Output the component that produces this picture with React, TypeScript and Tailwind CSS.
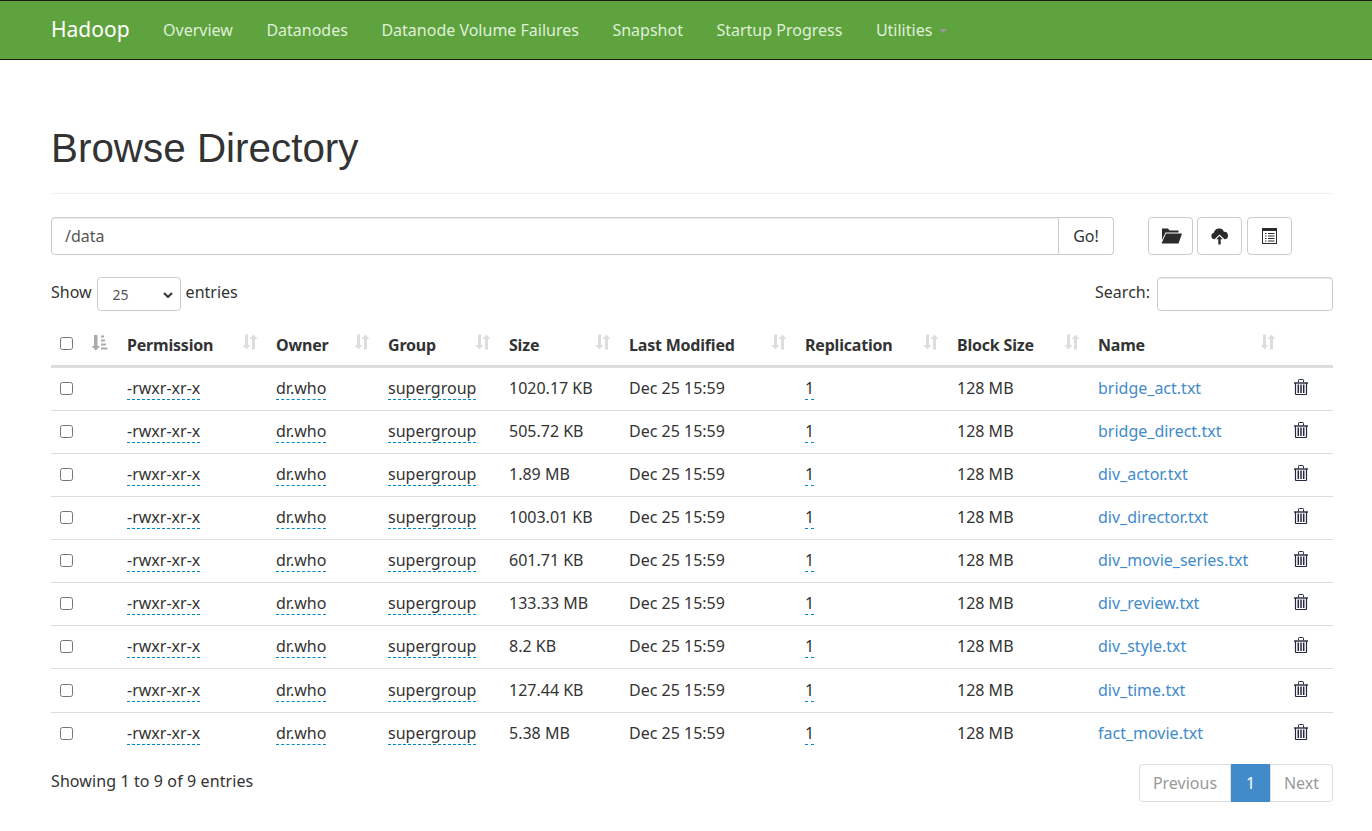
import React from 'react'

const navItems = ['Overview', 'Datanodes', 'Datanode Volume Failures', 'Snapshot', 'Startup Progress']

const files = [
  { size: '1020.17 KB', name: 'bridge_act.txt' },
  { size: '505.72 KB', name: 'bridge_direct.txt' },
  { size: '1.89 MB', name: 'div_actor.txt' },
  { size: '1003.01 KB', name: 'div_director.txt' },
  { size: '601.71 KB', name: 'div_movie_series.txt' },
  { size: '133.33 MB', name: 'div_review.txt' },
  { size: '8.2 KB', name: 'div_style.txt' },
  { size: '127.44 KB', name: 'div_time.txt' },
  { size: '5.38 MB', name: 'fact_movie.txt' },
]

const columns = ['Permission', 'Owner', 'Group', 'Size', 'Last Modified', 'Replication', 'Block Size', 'Name']

function SortIcon() {
  return (
    <svg width="16" height="16" viewBox="0 0 16 16" className="mb-[5px] shrink-0 text-[#dddddd]" fill="currentColor">
      <path d="M3 0.500h3v10.500h2.500L4.500 15.500 0.500 11H3z" />
      <path d="M10 15.500h3V5h2.500L11.500 0.500 7.500 5H10z" />
    </svg>
  )
}

function SortActiveIcon() {
  return (
    <svg width="17" height="16" viewBox="0 0 17 16" className="mb-[2px] text-[#aaaaaa]" fill="currentColor">
      <path d="M3 0h3.500v11h2.500L4.750 15.500 0.500 11H3z" />
      <path d="M10 0.500h3v2h-3zM10 4.500h4v2h-4zM10 8.500h5v2h-5zM10 12.500h6.500v2H10z" />
    </svg>
  )
}

function TrashIcon() {
  return (
    <svg width="14" height="16" viewBox="0 0 14 16" fill="none" stroke="#23283f" className="mb-[3px]">
      <path d="M0 4h14" strokeWidth="1.400" />
      <path d="M4.500 3.500V1.300a0.800 0.800 0 0 1 0.800-0.800h3.400a0.800 0.800 0 0 1 0.800 0.800v2.200" />
      <path d="M1.500 4v10.700a0.800 0.800 0 0 0 0.800 0.800h9.400a0.800 0.800 0 0 0 0.800-0.800V4" strokeWidth="1.200" />
      <path d="M4.300 5.500v8.500M7 5.500v8.500M9.700 5.500v8.500" strokeWidth="1.500" />
    </svg>
  )
}

function FolderOpenIcon() {
  return (
    <svg width="21" height="16" viewBox="0 0 21 16" fill="#2b2b2b" className="ml-[2px]">
      <path d="M1 0.500h6l1.500 2H17.500v2H4.500L1 12z" />
      <path d="M5 5.500h16l-3.500 10H0.500z" />
    </svg>
  )
}

function CloudUploadIcon() {
  return (
    <svg width="17" height="17" viewBox="0 0 17 17" fill="#2b2b2b">
      <path d="M8.500 0.500a4.500 4.500 0 0 1 4.300 3.200A3.800 3.800 0 0 1 13.500 11.300L8.500 6.500 3.500 11.300A3.300 3.300 0 0 1 2.900 4.800 5 5 0 0 1 8.500 0.500z" />
      <path d="M8.500 8l3.200 3.200H9.700V16.500H7.300V11.200H5.300z" />
    </svg>
  )
}

function ListAltIcon() {
  return (
    <svg width="15" height="16" viewBox="0 0 15 16" fill="none">
      <rect x="0.500" y="0.500" width="14" height="15" stroke="#2b2b2b" />
      <rect x="0" y="0" width="15" height="3" fill="#2b2b2b" />
      <path d="M3 5.500h1.500M6 5.500h6.500M3 8h1.500M6 8h6.500M3 10.500h1.500M6 10.500h6.500M3 13h1.500M6 13h6.500" stroke="#2b2b2b" />
    </svg>
  )
}

function IconButton({ children, className }: { children: React.ReactNode; className: string }) {
  return (
    <button className={`flex h-[38px] w-[45px] items-center justify-center rounded-[4px] border border-[#cccccc] bg-white ${className}`}>
      {children}
    </button>
  )
}

export default function App() {
  return (
    <div className="min-h-[831px] bg-white font-['Noto_Sans',sans-serif] text-[16px] text-[#333333]">
      <nav className="flex h-[60px] items-center border-y border-[#1a1a1a] bg-[#5fa33e] pl-[51px]">
        <a className="mr-[33.500px] text-[21px] text-white">Hadoop</a>
        <ul className="flex items-center gap-[33.500px] text-[#dff0d8]">
          {navItems.map((item) => (
            <li key={item}>{item}</li>
          ))}
          <li className="flex items-center gap-[7px]">
            Utilities
            <span className="mt-[2px] h-0 w-0 border-x-[4px] border-t-[4px] border-x-transparent border-t-[#999999]" />
          </li>
        </ul>
      </nav>

      <main className="pr-[39px] pl-[51px]">
        <div className="mt-[60px] border-b border-[#eeeeee] pb-[17px]">
          <h1 className="pt-[1px] font-['Liberation_Sans',sans-serif] text-[40.400px] leading-[55px] font-normal">Browse Directory</h1>
        </div>

        <div className="mt-[23px] flex items-center">
          <div className="flex h-[38px] w-[1063px]">
            <input
              readOnly
              value="/data"
              className="min-w-0 flex-1 rounded-l-[4px] border border-[#cccccc] px-[13px] text-[#555555] shadow-[inset_0_1px_1px_rgba(0,0,0,0.075)] outline-none"
            />
            <button className="w-[55px] rounded-r-[4px] border border-l-0 border-[#cccccc] bg-white">Go!</button>
          </div>
          <IconButton className="ml-[34px]">
            <FolderOpenIcon />
          </IconButton>
          <IconButton className="ml-[4px]">
            <CloudUploadIcon />
          </IconButton>
          <IconButton className="ml-[5px]">
            <ListAltIcon />
          </IconButton>
        </div>

        <div className="mt-[22px] flex h-[34px] items-center justify-between">
          <div className="flex items-center gap-[5px]">
            <span className="mb-[4px]">Show</span>
            <div className="relative">
              <select className="block h-[34px] w-[84px] appearance-none rounded-[4px] border border-[#cccccc] bg-white pl-[15px] text-[14px] text-[#555555]">
                <option>25</option>
              </select>
              <svg width="10" height="6" viewBox="0 0 10 6" fill="none" stroke="#333333" strokeWidth="2" className="absolute top-[15px] left-[66px]">
                <path d="M1 1l4 4 4-4" />
              </svg>
            </div>
            <span className="mb-[4px]">entries</span>
          </div>
          <div className="flex items-center gap-[7px]">
            <span className="mb-[4px]">Search:</span>
            <input className="h-[34px] w-[176px] rounded-[4px] border border-[#cccccc] shadow-[inset_0_1px_1px_rgba(0,0,0,0.075)] outline-none" />
          </div>
        </div>

        <table className="mt-[12px] w-[1282px] table-fixed border-collapse">
          <colgroup>
            <col className="w-[33px]" />
            <col className="w-[35px]" />
            <col className="w-[149px]" />
            <col className="w-[112px]" />
            <col className="w-[121px]" />
            <col className="w-[120px]" />
            <col className="w-[176px]" />
            <col className="w-[152px]" />
            <col className="w-[141px]" />
            <col className="w-[196px]" />
            <col className="w-[47px]" />
          </colgroup>
          <thead>
            <tr className="h-[43px] border-b-[3px] border-[#dddddd]">
              <th className="pl-[9px] text-left align-middle">
                <input type="checkbox" className="block h-[13px] w-[13px]" />
              </th>
              <th className="pl-[7px] text-left">
                <SortActiveIcon />
              </th>
              {columns.map((col) => (
                <th key={col} className="pt-[2px] pr-[10px] pl-[8px] text-left font-bold tracking-[-0.2px]">
                  <div className="flex items-center justify-between">
                    {col}
                    <SortIcon />
                  </div>
                </th>
              ))}
              <th />
            </tr>
          </thead>
          <tbody>
            {files.map((file, i) => (
              <tr key={file.name} className={`${i === 0 || i === 7 ? 'h-[44px]' : 'h-[43px]'} ${i < 8 ? 'border-b border-[#dddddd]' : ''}`}>
                <td className="pl-[9px]">
                  <input type="checkbox" className="block h-[13px] w-[13px]" />
                </td>
                <td />
                <td className="px-[8px] pb-[1px]">
                  <span className="border-b border-dashed border-[#0088cc]">-rwxr-xr-x</span>
                </td>
                <td className="px-[8px] pb-[1px]">
                  <span className="border-b border-dashed border-[#0088cc]">dr.who</span>
                </td>
                <td className="px-[8px] pb-[1px]">
                  <span className="border-b border-dashed border-[#0088cc]">supergroup</span>
                </td>
                <td className="px-[8px] pb-[1px]">{file.size}</td>
                <td className="px-[8px] pb-[1px]">Dec 25 15:59</td>
                <td className="px-[8px] pb-[1px]">
                  <span className="border-b border-dashed border-[#0088cc]">1</span>
                </td>
                <td className="px-[8px] pb-[1px]">128 MB</td>
                <td className="px-[8px] pb-[1px] text-[#428bca]">{file.name}</td>
                <td className={`pl-[8px] ${i === 0 ? 'pb-[1px]' : ''}`}>
                  <TrashIcon />
                </td>
              </tr>
            ))}
          </tbody>
        </table>

        <div className="mt-[9px] flex items-start justify-between">
          <div className="mt-[5px] tracking-[0.1px]">Showing 1 to 9 of 9 entries</div>
          <div className="flex h-[38px] text-[#999999]">
            <span className="flex w-[92px] items-center justify-center rounded-l-[4px] border border-[#dddddd]">Previous</span>
            <span className="flex w-[39px] items-center justify-center bg-[#428bca] text-white">1</span>
            <span className="flex w-[63px] items-center justify-center rounded-r-[4px] border border-[#dddddd]">Next</span>
          </div>
        </div>
      </main>
    </div>
  )
}
